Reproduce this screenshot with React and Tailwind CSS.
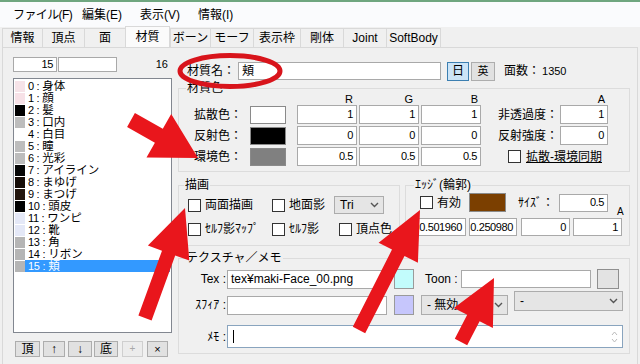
import React from 'react'

const mats = [
  ['0', '身体', 'bg-[#f6e3e8]'],
  ['1', '顔', 'bg-[#f7e1e7]'],
  ['2', '髪', 'bg-[#000000]'],
  ['3', '口内', 'bg-[#bdbdbd]'],
  ['4', '白目', 'bg-[#ffffff]'],
  ['5', '瞳', 'bg-[#bdbdbd]'],
  ['6', '光彩', 'bg-[#bdbdbd]'],
  ['7', 'アイライン', 'bg-[#060606]'],
  ['8', 'まゆげ', 'bg-[#160d08]'],
  ['9', 'まつげ', 'bg-[#23160e]'],
  ['10', '頭皮', 'bg-[#000000]'],
  ['11', 'ワンピ', 'bg-[#e4e8f7]'],
  ['12', '靴', 'bg-[#e4e8f7]'],
  ['13', '角', 'bg-[#b5b5b5]'],
  ['14', 'リボン', 'bg-[#b5b5b5]'],
  ['15', '頬', 'bg-[#b5b5b5]'],
]

const tabs = [
  ['情報', 'w-[40px]'],
  ['頂点', 'w-[42px]'],
  ['面', 'w-[41px]'],
  ['材質', 'w-[45px]', true],
  ['ボーン', 'w-[40px]'],
  ['モーフ', 'w-[43px]'],
  ['表示枠', 'w-[47px]'],
  ['剛体', 'w-[43px]'],
  ['Joint', 'w-[43px]'],
  ['SoftBody', 'w-[55px]'],
]

// polygon for a fat arrow from tail to tip
function arrow(tx, ty, px, py, hl = 46, hw = 24, sw = 7) {
  const dx = px - tx, dy = py - ty
  const len = Math.hypot(dx, dy)
  const ux = dx / len, uy = dy / len
  const nx = -uy, ny = ux
  const bx = px - ux * hl, by = py - uy * hl
  const p = [
    [tx + nx * sw, ty + ny * sw],
    [bx + nx * sw, by + ny * sw],
    [bx + nx * hw, by + ny * hw],
    [px, py],
    [bx - nx * hw, by - ny * hw],
    [bx - nx * sw, by - ny * sw],
    [tx - nx * sw, ty - ny * sw],
  ]
  return p.map((q) => q.map((v) => v.toFixed(1)).join(',')).join(' ')
}

const Field = ({ className = '', left, children }) => (
  <div
    className={
      'bg-white border border-[#a9a9a9] flex items-center px-[3px] text-[11px] tracking-[-0.4px] leading-none ' +
      (left ? 'justify-start ' : 'justify-end ') +
      className
    }
  >
    {children}
  </div>
)

const Check = () => <div className="w-[13px] h-[13px] shrink-0 border border-[#333333] bg-white" />

const Chevron = () => (
  <svg width="9" height="6" viewBox="0 0 9 6" className="shrink-0">
    <polyline points="1,1 4.5,4.5 8,1" fill="none" stroke="#555" strokeWidth="1.4" />
  </svg>
)

const Select = ({ className = '', children }) => (
  <div className={'bg-[#e5e5e5] border border-[#acacac] flex items-center justify-between pl-[5px] pr-[4px] leading-none ' + className}>
    <span>{children}</span>
    <Chevron />
  </div>
)

const Group = ({ label, className = '', labelClass = 'left-[7px]', children }) => (
  <div className={'relative border border-[#dcdcdc] ' + className}>
    <span className={'absolute -top-[8px] bg-[#f0f0f0] px-[1px] leading-[14px] ' + labelClass}>{label}</span>
    {children}
  </div>
)

const Btn = ({ className = '', children }) => (
  <div className={'h-[16px] flex items-center justify-center border border-[#adadad] bg-[#e1e1e1] leading-none ' + className}>
    {children}
  </div>
)

export default function App() {
  return (
    <div className="relative w-[640px] h-[364px] overflow-hidden bg-[#f0f0f0] text-[12px] text-black font-['Liberation_Sans','Noto_Sans_CJK_JP',sans-serif]">
      <div className="h-[2px] bg-[#6fa67f]" />
      {/* menu */}
      <div className="h-[25px] bg-[#fafbfd] flex items-center pl-[13px] leading-none">
        <span className="w-[69px] whitespace-nowrap tracking-[-0.6px]">ファイル(F)</span>
        <span className="w-[58px] whitespace-nowrap">編集(E)</span>
        <span className="w-[58px] whitespace-nowrap">表示(V)</span>
        <span className="whitespace-nowrap">情報(I)</span>
      </div>
      {/* tabs */}
      <div className="h-[20px] flex items-end pl-[2px]">
        {tabs.map(([t, w, active], i) => (
          <div
            key={t}
            className={
              'flex items-center justify-center leading-none border-t border-l border-[#d9d9d9] ' +
              w +
              (active ? ' h-[21px] bg-[#fbfbfb] border-r' : ' h-[19px] bg-[#f0f0f0]') +
              (i === tabs.length - 1 ? ' border-r' : '')
            }
          >
            {t}
          </div>
        ))}
      </div>
      {/* content */}
      <div className="ml-[2px] w-[636px] h-[320px] border border-[#d9d9d9] flex">
        {/* left column */}
        <div className="ml-[10px] w-[159px] pt-[9px] flex flex-col">
          <div className="h-[15px] flex items-center">
            <Field className="w-[44px] h-[15px]">15</Field>
            <Field className="ml-[1px] w-[59px] h-[15px]" />
            <span className="ml-auto pr-[4px] text-[11px] leading-none">16</span>
          </div>
          <div className="mt-[6px] h-[255px] border border-[#828790] bg-white pt-[1px] pl-[1px] pr-[1px]">
            {mats.map(([n, name, c]) => (
              <div key={n} className="h-[12px] flex items-center overflow-hidden">
                <div className={'w-[10px] h-[11px] shrink-0 ' + c} />
                <div
                  className={
                    'flex-1 h-[12px] flex items-center pl-[3px] leading-[12px] whitespace-nowrap ' +
                    (n === '15' ? 'bg-[#3399ff] text-white' : '')
                  }
                >
                  <span className="text-[11px] leading-[12px] tracking-[-0.3px]">{n} :</span>
                  <span className="ml-[3px] text-[11.5px] leading-[12px]">{name}</span>
                </div>
              </div>
            ))}
          </div>
          <div className="mt-[8px] flex items-center pl-[2px]">
            <Btn className="w-[25px]">頂</Btn>
            <Btn className="ml-[3px] w-[22px]">↑</Btn>
            <Btn className="ml-[3px] w-[24px]">↓</Btn>
            <Btn className="ml-[2px] w-[24px]">底</Btn>
            <Btn className="ml-[4px] w-[21px] text-[#a8a8a8] border-[#cfcfcf] bg-[#ececec] text-[10px]">+</Btn>
            <Btn className="ml-[4px] w-[21px] text-[11px]">×</Btn>
          </div>
        </div>

        {/* right column */}
        <div className="ml-[6px] w-[452px] pt-[13px] flex flex-col">
          <div className="h-[20px] flex items-center">
            <span className="w-[60px] pl-[9px] leading-none whitespace-nowrap">材質名：</span>
            <Field left className="w-[203px] h-[18px] text-[12px]">
              頬
            </Field>
            <div className="ml-[6px] w-[22px] h-[19px] bg-[#cce4f7] border border-[#3c7fb1] flex items-center justify-center leading-none">
              日
            </div>
            <div className="ml-[2px] w-[24px] h-[19px] bg-[#e1e1e1] border border-[#adadad] flex items-center justify-center leading-none text-[11px]">
              英
            </div>
            <span className="ml-[9px] leading-none">面数：</span>
            <span className="ml-[2px] leading-none text-[11px]">1350</span>
          </div>

          {/* 材質色 */}
          <Group label="材質色" className="mt-[7px] h-[84px] pt-[5px]">
            <div className="h-[11px] flex items-center text-[11px] leading-none">
              <div className="w-[118px]" />
              <div className="w-[60px] text-right pr-[4px]">R</div>
              <div className="ml-[2px] w-[60px] text-right pr-[6px]">G</div>
              <div className="ml-[2px] w-[60px] text-right pr-[3px]">B</div>
              <div className="w-[79px]" />
              <div className="w-[48px] text-right pr-[3px]">A</div>
            </div>
            {[
              ['拡散色：', 'bg-white', ['1', '1', '1'], '非透過度：', '1'],
              ['反射色：', 'bg-black', ['0', '0', '0'], '反射強度：', '0'],
              ['環境色：', 'bg-[#808080]', ['0.5', '0.5', '0.5'], null, null],
            ].map(([lab, sw, vals, l2, v2], i) => (
              <div key={lab} className={'h-[19px] flex items-center ' + (i ? 'mt-[2px]' : '')}>
                <span className="w-[63px] text-right leading-none whitespace-nowrap">{lab}</span>
                <div className={'ml-[8px] w-[36px] h-[18px] border border-[#8a8a8a] ' + sw} />
                <Field className="ml-[11px] w-[60px] h-[19px]">{vals[0]}</Field>
                <Field className="ml-[2px] w-[60px] h-[19px]">{vals[1]}</Field>
                <Field className="ml-[2px] w-[60px] h-[19px]">{vals[2]}</Field>
                {l2 ? (
                  <>
                    <span className="ml-[17px] w-[60px] leading-none whitespace-nowrap">{l2}</span>
                    <Field className="ml-[2px] w-[48px] h-[19px]">{v2}</Field>
                  </>
                ) : (
                  <>
                    <div className="ml-[27px]">
                      <Check />
                    </div>
                    <span className="ml-[5px] leading-none underline whitespace-nowrap">拡散-環境同期</span>
                  </>
                )}
              </div>
            ))}
          </Group>

          <div className="mt-[13px] flex">
            {/* 描画 */}
            <Group label="描画" className="w-[222px] h-[61px] pt-[10px] pl-[9px]" labelClass="left-[5px]">
              <div className="h-[18px] flex items-center">
                <div className="w-[84px] flex items-center">
                  <Check />
                  <span className="ml-[4px] leading-none whitespace-nowrap">両面描画</span>
                </div>
                <div className="w-[62px] flex items-center">
                  <Check />
                  <span className="ml-[4px] leading-none whitespace-nowrap">地面影</span>
                </div>
                <Select className="w-[50px] h-[18px]">Tri</Select>
              </div>
              <div className="mt-[8px] h-[14px] flex items-center">
                <div className="w-[84px] flex items-center">
                  <Check />
                  <span className="ml-[4px] leading-none whitespace-nowrap">ｾﾙﾌ影ﾏｯﾌﾟ</span>
                </div>
                <div className="w-[67px] flex items-center">
                  <Check />
                  <span className="ml-[4px] leading-none whitespace-nowrap">ｾﾙﾌ影</span>
                </div>
                <div className="flex items-center">
                  <Check />
                  <span className="ml-[4px] leading-none whitespace-nowrap">頂点色</span>
                </div>
              </div>
            </Group>
            {/* エッジ */}
            <Group label="ｴｯｼﾞ(輪郭)" className="ml-[5px] w-[225px] h-[61px] pt-[7px] pl-[14px]" labelClass="left-[8px]">
              <div className="h-[19px] flex items-center">
                <div className="w-[49px] flex items-center">
                  <Check />
                  <span className="ml-[4px] leading-none">有効</span>
                </div>
                <div className="w-[37px] h-[19px] bg-[#7b3f00] border border-[#8a8a8a]" />
                <span className="ml-[12px] w-[41px] leading-none whitespace-nowrap">ｻｲｽﾞ：</span>
                <Field className="w-[49px] h-[18px]">0.5</Field>
                <span className="ml-[9px] self-end -mb-[5px] text-[10px] leading-none">A</span>
              </div>
              <div className="mt-[6px] -ml-[2px] flex items-center">
                <Field className="w-[48px] h-[18px] px-[2px]">0.501960</Field>
                <Field className="ml-[3px] w-[48px] h-[18px] px-[2px]">0.250980</Field>
                <Field className="ml-[4px] w-[49px] h-[18px]">0</Field>
                <Field className="ml-[3px] w-[49px] h-[18px]">1</Field>
              </div>
            </Group>
          </div>

          {/* テクスチャ／メモ */}
          <Group label="テクスチャ／メモ" className="mt-[12px] h-[96px] pt-[10px]" labelClass="left-[6px]">
            <div className="h-[20px] flex items-center">
              <span className="w-[47px] text-right leading-none whitespace-nowrap">Tex :</span>
              <Field left className="ml-[1px] w-[160px] h-[19px] text-[12px] tracking-normal">
                tex¥maki-Face_00.png
              </Field>
              <div className="ml-[7px] w-[20px] h-[20px] bg-[#c2fcfc] border border-[#9a9a9a]" />
              <span className="ml-[11px] w-[36px] leading-none whitespace-nowrap">Toon :</span>
              <Field className="w-[130px] h-[18px]" />
              <div className="ml-[6px] w-[22px] h-[20px] bg-[#e3e3e3] border border-[#8f8f8f]" />
            </div>
            <div className="mt-[6px] h-[20px] flex items-center">
              <span className="w-[47px] text-right leading-none whitespace-nowrap">ｽﾌｨｱ :</span>
              <Field className="ml-[1px] w-[160px] h-[19px]" />
              <div className="ml-[7px] w-[20px] h-[20px] bg-[#c6c6fc] border border-[#9a9a9a]" />
              <Select className="ml-[7px] w-[87px] h-[20px]">- 無効</Select>
              <Select className="ml-[6px] w-[109px] h-[20px] self-start -mt-[4px]">-</Select>
            </div>
            <div className="mt-[10px] h-[23px] flex items-center">
              <span className="w-[47px] text-right leading-none whitespace-nowrap">ﾒﾓ :</span>
              <div className="ml-[1px] w-[396px] h-[23px] bg-white border border-[#89a4be] flex items-center pl-[5px] pr-[4px]">
                <div className="w-[1px] h-[13px] bg-black" />
                <div className="ml-auto flex flex-col items-center gap-[2px]">
                  <svg width="7" height="5" viewBox="0 0 7 5">
                    <polyline points="1,4 3.5,1 6,4" fill="none" stroke="#bbb" strokeWidth="1" />
                  </svg>
                  <svg width="7" height="5" viewBox="0 0 7 5">
                    <polyline points="1,1 3.5,4 6,1" fill="none" stroke="#bbb" strokeWidth="1" />
                  </svg>
                </div>
              </div>
            </div>
          </Group>
        </div>
      </div>

      {/* red annotations */}
      <svg className="absolute inset-0 pointer-events-none" width="640" height="364" viewBox="0 0 640 364">
        <ellipse cx="230" cy="71" rx="50" ry="15.5" fill="none" stroke="#d8141b" strokeWidth="5" />
        <polygon points={arrow(131, 120, 198, 158, 45, 25, 8)} fill="#e9161c" />
        <polygon points={arrow(145, 318, 185, 208, 48, 22, 7)} fill="#e9161c" />
        <polygon points={arrow(359, 330, 420, 210, 48, 22, 7)} fill="#e9161c" />
        <polygon points={arrow(461, 342, 494, 278, 45, 22, 7)} fill="#e9161c" />
      </svg>
    </div>
  )
}
